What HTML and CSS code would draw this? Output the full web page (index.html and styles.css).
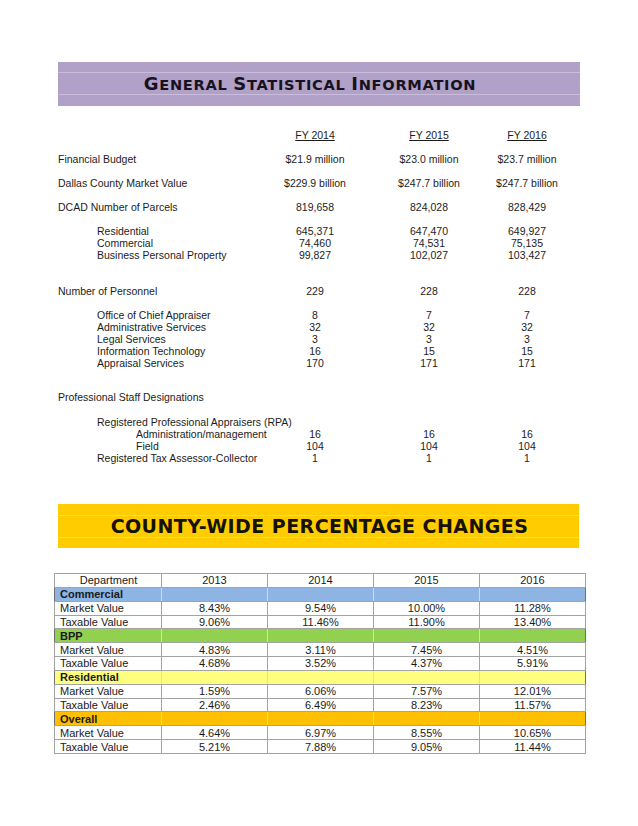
FILE: index.html
```html
<!DOCTYPE html>
<html>
<head>
<meta charset="utf-8">
<link rel="stylesheet" href="styles.css">
</head>
<body>
<div class="page">
  <div class="banner purple">
    <h1 class="title-sc"><span class="big">G</span>ENERAL <span class="big">S</span>TATISTICAL <span class="big">I</span>NFORMATION</h1>
  </div>

  <div class="stats">
    <div class="row r-fy"><span></span><span class="v u">FY 2014</span><span class="v u">FY 2015</span><span class="v u">FY 2016</span></div>
    <div class="row r-main"><span>Financial Budget</span><span class="v">$21.9 million</span><span class="v">$23.0 million</span><span class="v">$23.7 million</span></div>
    <div class="row r-main"><span>Dallas County Market Value</span><span class="v">$229.9 billion</span><span class="v">$247.7 billion</span><span class="v">$247.7 billion</span></div>
    <div class="row r-main"><span>DCAD Number of Parcels</span><span class="v">819,658</span><span class="v">824,028</span><span class="v">828,429</span></div>
    <div class="row r-main"><span class="i1">Residential</span><span class="v">645,371</span><span class="v">647,470</span><span class="v">649,927</span></div>
    <div class="row"><span class="i1">Commercial</span><span class="v">74,460</span><span class="v">74,531</span><span class="v">75,135</span></div>
    <div class="row"><span class="i1">Business Personal Property</span><span class="v">99,827</span><span class="v">102,027</span><span class="v">103,427</span></div>

    <div class="row r-sec"><span>Number of Personnel</span><span class="v">229</span><span class="v">228</span><span class="v">228</span></div>
    <div class="row r-sub"><span class="i1">Office of Chief Appraiser</span><span class="v">8</span><span class="v">7</span><span class="v">7</span></div>
    <div class="row"><span class="i1">Administrative Services</span><span class="v">32</span><span class="v">32</span><span class="v">32</span></div>
    <div class="row"><span class="i1">Legal Services</span><span class="v">3</span><span class="v">3</span><span class="v">3</span></div>
    <div class="row"><span class="i1">Information Technology</span><span class="v">16</span><span class="v">15</span><span class="v">15</span></div>
    <div class="row"><span class="i1">Appraisal Services</span><span class="v">170</span><span class="v">171</span><span class="v">171</span></div>

    <div class="row r-prof"><span>Professional Staff Designations</span><span></span><span></span><span></span></div>
    <div class="row r-rpa"><span class="i1 nowrap">Registered Professional Appraisers (RPA)</span><span></span><span></span><span></span></div>
    <div class="row"><span class="i2">Administration/management</span><span class="v">16</span><span class="v">16</span><span class="v">16</span></div>
    <div class="row"><span class="i2">Field</span><span class="v">104</span><span class="v">104</span><span class="v">104</span></div>
    <div class="row"><span class="i1">Registered Tax Assessor-Collector</span><span class="v">1</span><span class="v">1</span><span class="v">1</span></div>
  </div>

  <div class="banner yellow">
    <h2 class="title-bold">COUNTY-WIDE PERCENTAGE CHANGES</h2>
  </div>

  <table class="pct">
    <tr class="head"><td>Department</td><td>2013</td><td>2014</td><td>2015</td><td>2016</td></tr>
    <tr class="grp blue"><td>Commercial</td><td></td><td></td><td></td><td></td></tr>
    <tr><td>Market Value</td><td>8.43%</td><td>9.54%</td><td>10.00%</td><td>11.28%</td></tr>
    <tr><td>Taxable Value</td><td>9.06%</td><td>11.46%</td><td>11.90%</td><td>13.40%</td></tr>
    <tr class="grp green"><td>BPP</td><td></td><td></td><td></td><td></td></tr>
    <tr><td>Market Value</td><td>4.83%</td><td>3.11%</td><td>7.45%</td><td>4.51%</td></tr>
    <tr><td>Taxable Value</td><td>4.68%</td><td>3.52%</td><td>4.37%</td><td>5.91%</td></tr>
    <tr class="grp lemon"><td>Residential</td><td></td><td></td><td></td><td></td></tr>
    <tr><td>Market Value</td><td>1.59%</td><td>6.06%</td><td>7.57%</td><td>12.01%</td></tr>
    <tr><td>Taxable Value</td><td>2.46%</td><td>6.49%</td><td>8.23%</td><td>11.57%</td></tr>
    <tr class="grp orange"><td>Overall</td><td></td><td></td><td></td><td></td></tr>
    <tr><td>Market Value</td><td>4.64%</td><td>6.97%</td><td>8.55%</td><td>10.65%</td></tr>
    <tr><td>Taxable Value</td><td>5.21%</td><td>7.88%</td><td>9.05%</td><td>11.44%</td></tr>
  </table>
</div>
</body>
</html>
```

FILE: styles.css
```css
* { box-sizing: border-box; }
html, body { margin: 0; padding: 0; background: #fff; }
body {
  font-family: "Liberation Sans", Arial, sans-serif;
  color: #1c1c1c;
  width: 638px;
  height: 826px;
  overflow: hidden;
}
.page {
  padding-top: 62px;
}
.banner {
  margin-left: 58px;
  width: 522px;
  height: 44px;
  display: flex;
  align-items: center;
  justify-content: center;
}
.purple {
  background:
    linear-gradient(#c9bddb, #c9bddb) 0 10px / 100% 1px no-repeat,
    linear-gradient(#c9bddb, #c9bddb) 0 32px / 100% 1px no-repeat,
    #b1a0c7;
}
.yellow {
  margin-top: 17px;
  width: 521px;
  background:
    linear-gradient(#ffdc4a, #ffdc4a) 0 11px / 100% 1px no-repeat,
    linear-gradient(#ffdc4a, #ffdc4a) 0 33px / 100% 1px no-repeat,
    #ffcc00;
}
.title-sc {
  margin: 0 0 0 -18px;
  font-family: "DejaVu Sans", sans-serif;
  font-weight: bold;
  font-size: 14.6px;
  letter-spacing: 0.7px;
  color: #16121e;
  line-height: 1;
}
.title-sc .big { font-size: 18px; }
.title-bold {
  margin: 0 0 0 2px;
  font-family: "DejaVu Sans", sans-serif;
  font-weight: bold;
  font-size: 19px;
  letter-spacing: 0.45px;
  color: #151105;
  line-height: 1;
}

.stats {
  margin-top: 23px;
  margin-left: 58px;
  font-size: 10.5px;
  height: 358px;
}
.row {
  display: grid;
  grid-template-columns: 200px 114px 114px 82px;
  line-height: 12px;
  height: 12px;
  white-space: nowrap;
}
.row .v { text-align: center; }
.row .u { text-decoration: underline; }
.r-main { margin-top: 12px; }
.r-sec { margin-top: 24px; }
.r-sub { margin-top: 12px; }
.r-prof { margin-top: 22px; }
.r-rpa { margin-top: 13px; }
.i1 { padding-left: 39px; }
.i2 { padding-left: 78px; }
.nowrap { overflow: visible; }

.pct {
  margin-top: 25px;
  margin-left: 54px;
  width: 530px;
  border-collapse: collapse;
  table-layout: fixed;
  font-size: 11px;
  color: #1a1a1a;
}
.pct td {
  border: 1px solid #a3a3a3;
  height: 13.85px;
  padding: 0 4px;
  line-height: 12px;
  text-align: center;
  width: 106px;
}
.pct td:first-child {
  text-align: left;
  padding-left: 5px;
  width: 107px;
}
.pct tr.head td:first-child { text-align: center; }
.pct { border: 1px solid #6f6f6f; }
.pct .grp td:first-child { font-weight: bold; }
.pct .grp td { border-left-color: #d8d8d8; border-right-color: #d8d8d8; }
.pct .grp td:first-child { border-left-color: #6f6f6f; }
.pct .grp td:last-child { border-right-color: #6f6f6f; }
.blue td { background: #8db4e2; }
.green td { background: #92d050; }
.lemon td { background: #ffff7f; }
.orange td { background: #ffc000; }
```
